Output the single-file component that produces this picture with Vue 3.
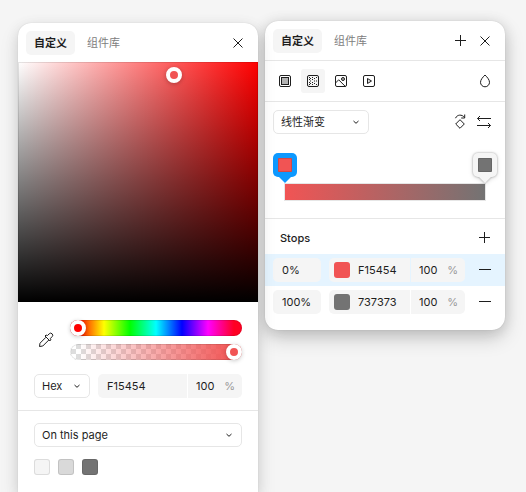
<script setup>
import { ref } from 'vue'

const hue = ref(0)
const alpha = ref(100)
const format = ref('Hex')
const library = ref('On this page')
const gradientType = ref('线性渐变')
const hex = ref('F15454')
const opacity = ref('100')
const selectedStop = ref(0)
const stops = ref([
  { position: '0%', hex: 'F15454', opacity: '100' },
  { position: '100%', hex: '737373', opacity: '100' }
])
const swatches = ['F5F5F5', 'D9D9D9', '737373']
</script>

<template>
  <main class="page">
    <section class="panel picker" aria-label="Color picker">
      <header class="head">
        <button class="tab active">自定义</button>
        <button class="tab">组件库</button>
        <span class="grow"></span>
        <button class="icon" aria-label="Close">
          <svg viewBox="0 0 24 24"><path d="M7.5 7.5l9 9M16.5 7.5l-9 9" /></svg>
        </button>
      </header>

      <div class="field"><span class="knob"></span></div>

      <div class="sliders">
        <button class="icon" aria-label="Pick a color">
          <svg viewBox="0 0 24 24">
            <path d="M11 8l1-1 1.5.5 1.7-1.7a1.900 1.900 0 0 1 2.900 2.900l-1.700 1.700.5 1.500-1 1zM12 9.200l-6 6-.5 3.300 3.300-.5 6-6" />
          </svg>
        </button>
        <div class="tracks">
          <input v-model="hue" class="range hue" type="range" min="0" max="360" aria-label="Hue" />
          <input v-model="alpha" class="range alpha" type="range" min="0" max="100" aria-label="Opacity" />
        </div>
      </div>

      <div class="values">
        <div class="select format">
          <select v-model="format" aria-label="Color format"><option>Hex</option><option>RGB</option></select>
          <svg class="chevron" viewBox="0 0 8 8"><path d="M1.500 3L4 5.300 6.500 3" /></svg>
        </div>
        <div class="combo">
          <input v-model="hex" class="hex" aria-label="Hex value" />
          <label class="percent"><input v-model="opacity" aria-label="Opacity percent" /><span>%</span></label>
        </div>
      </div>

      <div class="library">
        <div class="select">
          <select v-model="library" aria-label="Color source"><option>On this page</option></select>
          <svg class="chevron" viewBox="0 0 8 8"><path d="M1.500 3L4 5.300 6.500 3" /></svg>
        </div>
        <div class="swatches">
          <button v-for="s in swatches" :key="s" class="swatch" :style="{ background: '#' + s }" :aria-label="s"></button>
        </div>
      </div>
    </section>

    <section class="panel gradient" aria-label="Gradient">
      <header class="head lined">
        <button class="tab active">自定义</button>
        <button class="tab">组件库</button>
        <span class="grow"></span>
        <button class="icon" aria-label="Create style">
          <svg viewBox="0 0 24 24"><path d="M11.5 6v11M6 11.5h11" /></svg>
        </button>
        <button class="icon" aria-label="Close">
          <svg viewBox="0 0 24 24"><path d="M7.5 7.5l9 9M16.5 7.5l-9 9" /></svg>
        </button>
      </header>

      <div class="tools">
        <button class="icon" aria-label="Solid">
          <svg viewBox="0 0 24 24"><rect x="6.5" y="6.5" width="11" height="11" rx="1.5" /><rect x="8.5" y="8.5" width="7" height="7" fill="#b3b3b3" /></svg>
        </button>
        <button class="icon on" aria-label="Gradient">
          <svg viewBox="0 0 24 24">
            <rect x="6.5" y="6.5" width="11" height="11" rx="1.5" />
            <path class="dots" d="M8 8h1v1h-1zM8 10h1v1h-1zM8 13h1v1h-1zM8 15h1v1h-1zM9 9h1v1h-1zM9 11.5h1v1h-1zM9 14h1v1h-1zM11 8h1v1h-1zM11 10h1v1h-1zM11 13h1v1h-1zM11 15h1v1h-1zM13 9h1v1h-1zM13 11.5h1v1h-1zM13 14h1v1h-1zM15 8h1v1h-1zM15 11.5h1v1h-1zM15 15h1v1h-1z" />
          </svg>
        </button>
        <button class="icon" aria-label="Image">
          <svg viewBox="0 0 24 24"><rect x="6.5" y="6.5" width="11" height="11" rx="1.5" /><circle cx="14" cy="10" r="1.5" fill="#b3b3b3" /><path d="M6.5 14l3.200-3.200 6.600 6.600" /></svg>
        </button>
        <button class="icon" aria-label="Video">
          <svg viewBox="0 0 24 24"><rect x="6.5" y="6.5" width="11" height="11" rx="1.5" /><path d="M10.5 9.5v5l4-2.5z" fill="#ddd" /></svg>
        </button>
        <span class="grow"></span>
        <button class="icon" aria-label="Blend mode">
          <svg viewBox="0 0 24 24"><path d="M12 6c2.300 2.300 4.500 4.800 4.500 7.300a4.500 4.500 0 0 1-9 0C7.500 10.800 9.700 8.300 12 6z" /></svg>
        </button>
      </div>

      <div class="kind">
        <div class="select type">
          <select v-model="gradientType" aria-label="Gradient type"><option>线性渐变</option></select>
          <svg class="chevron" viewBox="0 0 8 8"><path d="M1.500 3L4 5.300 6.500 3" /></svg>
        </div>
        <span class="grow"></span>
        <button class="icon" aria-label="Rotate gradient">
          <svg viewBox="0 0 24 24"><path d="M11 9.700l4.300 4.300L11 18.300 6.700 14zM6.500 8.200C8 4.500 13 4 15.500 7.500M15.700 4.500V8h-3.500" /></svg>
        </button>
        <button class="icon" aria-label="Flip gradient">
          <svg viewBox="0 0 24 24"><path d="M18 8.5H4.500M7 6L4.500 8.500 7 11M4 15.5h13.500M15 13l2.500 2.500L15 18" /></svg>
        </button>
      </div>

      <div class="ramp">
        <div class="handles">
          <button
            v-for="(stop, i) in stops"
            :key="i"
            class="handle"
            :class="{ chosen: selectedStop === i }"
            :aria-label="'Stop ' + stop.position"
            @click="selectedStop = i"
          >
            <span :style="{ background: '#' + stop.hex }"></span>
          </button>
        </div>
        <div class="bar"></div>
      </div>

      <div class="stops">
        <div class="title">
          <h2>Stops</h2>
          <button class="icon" aria-label="Add stop">
            <svg viewBox="0 0 24 24"><path d="M11.5 6v11M6 11.5h11" /></svg>
          </button>
        </div>
        <div v-for="(stop, i) in stops" :key="i" class="row" :class="{ chosen: selectedStop === i }">
          <input v-model="stop.position" class="position" aria-label="Position" />
          <div class="combo">
            <label class="color">
              <span class="swatch" :style="{ background: '#' + stop.hex }"></span>
              <input v-model="stop.hex" aria-label="Stop color" />
            </label>
            <label class="percent"><input v-model="stop.opacity" aria-label="Stop opacity" /><span>%</span></label>
          </div>
          <button class="icon" aria-label="Remove stop">
            <svg viewBox="0 0 24 24"><path d="M6 11.5h12" /></svg>
          </button>
        </div>
      </div>
    </section>
  </main>
</template>

<style>
body {
  margin: 0;
  background: #f5f5f5;
}
</style>

<style scoped>
* {
  box-sizing: border-box;
}
.page {
  display: grid;
  grid-template-columns: 1fr 1fr;
  gap: 7px;
  height: 100vh;
  padding: 21px 21px 0 18px;
  overflow: hidden;
  font: 11px/16px Inter, "Noto Sans CJK SC", sans-serif;
  color: #1e1e1e;
}
button,
input,
select {
  margin: 0;
  padding: 0;
  border: 0;
  background: none;
  font: inherit;
  color: inherit;
  min-width: 0;
}
.panel {
  min-width: 0;
  background: #fff;
  border-radius: 13px;
  box-shadow: 0 0 1px rgba(0, 0, 0, 0.2), 0 2px 14px rgba(0, 0, 0, 0.12), 0 8px 20px rgba(0, 0, 0, 0.18);
}
.picker {
  position: relative;
  z-index: 1;
  margin-top: 2px;
  border-radius: 13px 13px 0 0;
  box-shadow: 0 0 1px rgba(0, 0, 0, 0.2), 0 4px 14px rgba(0, 0, 0, 0.1), 0 8px 20px rgba(0, 0, 0, 0.1);
}
.gradient {
  align-self: start;
  padding-bottom: 12px;
}
.grow {
  flex: 1;
}
.head,
.tools,
.kind {
  display: flex;
  align-items: center;
  padding: 0 8px;
}
.head {
  height: 39px;
}
.head.lined {
  height: 40px;
  border-bottom: 1px solid #e6e6e6;
}
.tab {
  height: 24px;
  margin-right: 4px;
  padding: 0 8px;
  border-radius: 5px;
  color: #808080;
}
.tab.active {
  background: #f5f5f5;
  color: #1e1e1e;
  font-weight: 700;
}
.icon {
  flex: none;
  width: 24px;
  height: 24px;
  border-radius: 3px;
}
.icon.on {
  background: #f5f5f5;
}
.icon svg {
  display: block;
  width: 24px;
  height: 24px;
}
svg {
  fill: none;
  stroke: #1e1e1e;
}
svg .dots {
  fill: #1e1e1e;
  stroke: none;
}
.field {
  position: relative;
  aspect-ratio: 1;
  background: linear-gradient(to top, #000, transparent), linear-gradient(to right, #fff, #f00);
  box-shadow: inset 0 0 0 1px rgba(0, 0, 0, 0.1);
}
.knob {
  position: absolute;
  left: 65%;
  top: 5%;
  width: 16px;
  height: 16px;
  margin: -7px -8px;
  border: 4px solid #fff;
  border-radius: 50%;
  background: #f15454;
  box-shadow: 0 1px 4px rgba(0, 0, 0, 0.25);
}
.sliders {
  display: flex;
  align-items: center;
  gap: 12px;
  padding: 18px 16px 14px;
}
.tracks {
  display: flex;
  flex: 1;
  flex-direction: column;
  gap: 8px;
}
.range {
  appearance: none;
  display: block;
  width: 100%;
  height: 16px;
  border-radius: 8px;
  box-shadow: inset 0 0 0 1px rgba(0, 0, 0, 0.1);
}
.hue {
  --dot: #f00;
  background: linear-gradient(to right, #f00 8px, #ff0, #0f0, #0ff, #00f, #f0f, #f02 calc(100% - 8px));
}
.alpha {
  --dot: #f15454;
  background: linear-gradient(to right, transparent 8px, #f15454 calc(100% - 8px)),
    conic-gradient(#fff 25%, #ddd 0 50%, #fff 0 75%, #ddd 0) -4px 0 / 10px 10px;
}
.range::-webkit-slider-thumb {
  appearance: none;
  width: 16px;
  height: 16px;
  border: 4px solid #fff;
  border-radius: 50%;
  background: var(--dot);
  box-shadow: 0 1px 4px rgba(0, 0, 0, 0.2);
}
.values {
  display: flex;
  gap: 8px;
  padding: 0 16px 12px;
  border-bottom: 1px solid #e6e6e6;
}
.select {
  position: relative;
}
.select select {
  appearance: none;
  display: block;
  width: 100%;
  height: 24px;
  padding: 0 20px 0 7px;
  border: 1px solid #e6e6e6;
  border-radius: 5px;
}
.chevron {
  position: absolute;
  top: 8px;
  right: 9px;
  width: 8px;
  height: 8px;
  pointer-events: none;
}
.format {
  width: 56px;
}
.type {
  width: 96px;
}
.combo {
  display: flex;
  flex: 1;
  gap: 1px;
  min-width: 0;
  height: 24px;
  border-radius: 5px;
  overflow: hidden;
}
.hex,
.color,
.percent {
  background: #f5f5f5;
}
.hex {
  flex: 1;
  padding: 0 9px;
}
.color {
  display: flex;
  flex: 1;
  align-items: center;
  gap: 8px;
  min-width: 0;
  padding-left: 5px;
}
.color input {
  width: 100%;
}
.percent {
  display: flex;
  align-items: center;
  justify-content: space-between;
  width: 54px;
  padding: 0 7px 0 8px;
}
.percent input {
  width: 26px;
}
.percent span {
  color: #999;
}
.library {
  padding: 12px 16px;
}
.swatches {
  display: flex;
  gap: 8px;
  padding-top: 12px;
}
.swatch {
  flex: none;
  width: 16px;
  height: 16px;
  border-radius: 3px;
  box-shadow: inset 0 0 0 1px rgba(0, 0, 0, 0.1);
}
.row .swatch {
  box-shadow: none;
}
.tools {
  gap: 4px;
  height: 41px;
  border-bottom: 1px solid #e6e6e6;
}
.kind {
  padding-top: 8px;
}
.ramp {
  padding: 19px 8px 17px;
  border-bottom: 1px solid #e6e6e6;
}
.handles {
  display: flex;
  justify-content: space-between;
  padding-bottom: 6px;
}
.handle {
  position: relative;
  display: grid;
  place-items: center;
  width: 24px;
  height: 24px;
  border-radius: 5px;
  background: #f5f5f5;
  filter: drop-shadow(0 0 1px rgba(0, 0, 0, 0.3)) drop-shadow(0 1px 2px rgba(0, 0, 0, 0.15));
}
.handle::after {
  content: "";
  position: absolute;
  top: 100%;
  left: 6px;
  border: 6px solid transparent;
  border-top-color: #f5f5f5;
  border-bottom: 0;
}
.handle.chosen {
  background: #0d99ff;
  filter: none;
}
.handle.chosen::after {
  border-top-color: #0d99ff;
}
.handle span {
  width: 14px;
  height: 14px;
  border-radius: 1px;
  box-shadow: inset 0 0 0 1px rgba(0, 0, 0, 0.12);
}
.bar {
  height: 18px;
  margin: 0 11px;
  border: 1px solid #e6e6e6;
  background: linear-gradient(to right, #f15454, #737373);
}
.title {
  display: flex;
  align-items: center;
  justify-content: space-between;
  height: 35px;
  padding: 3px 8px 0 15px;
}
.title h2 {
  margin: 0;
  font-size: 11px;
  font-weight: 500;
}
.row {
  display: flex;
  align-items: center;
  gap: 8px;
  height: 32px;
  padding: 0 8px;
}
.row.chosen {
  background: #e5f4ff;
}
.position {
  width: 48px;
  height: 24px;
  padding: 0 9px;
  border-radius: 5px;
  background: #f5f5f5;
}
</style>
